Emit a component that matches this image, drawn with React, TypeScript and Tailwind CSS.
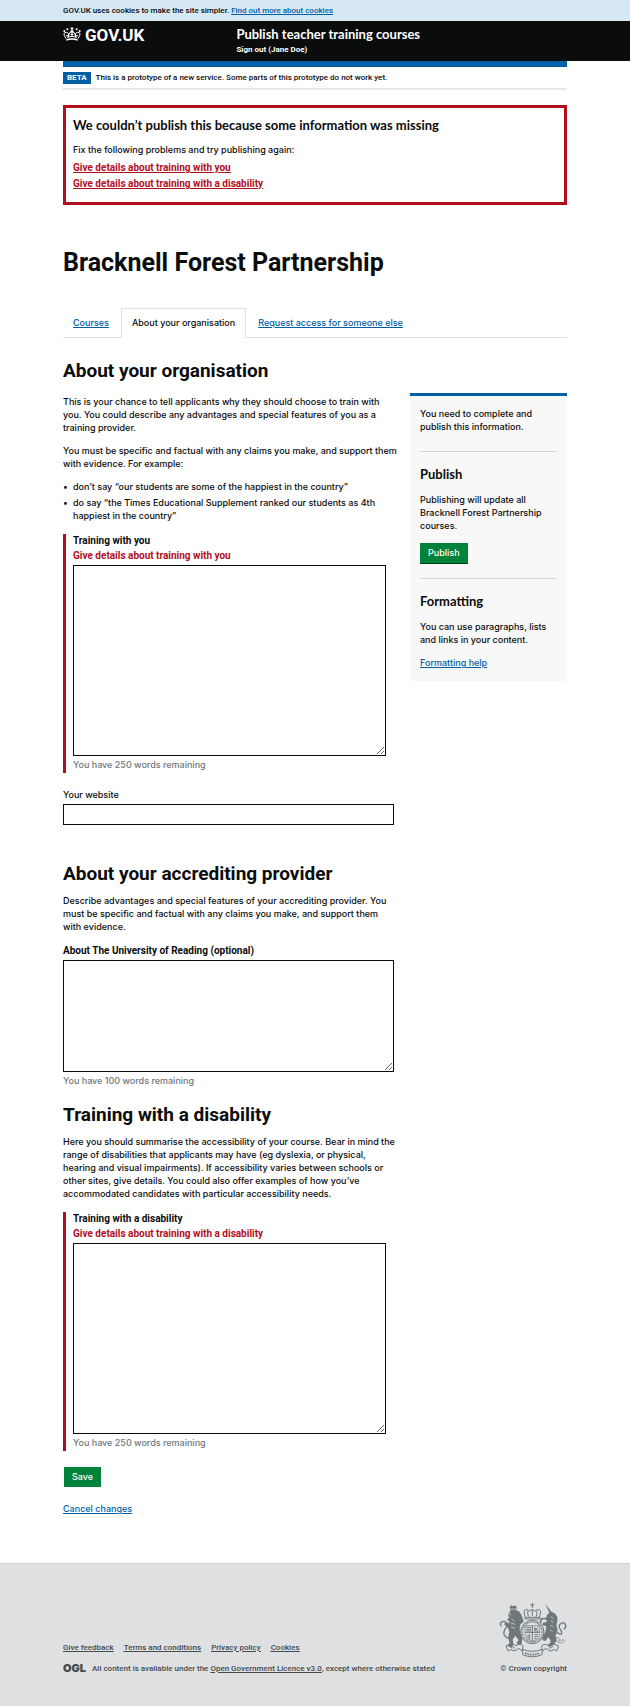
import type { ReactNode } from "react";

const link = "text-[#005ea5] underline";
const h2 = "font-[Roboto,sans-serif] text-[19px] leading-6 font-bold";
const h3 = "font-[Lato,sans-serif] text-[13px] leading-4 font-bold";
const strong = "font-[Roboto,sans-serif] text-[10px] leading-[13px] font-bold";
const field = "block w-full rounded-none border border-[#0b0c0c] bg-white";

function Crown() {
  return (
    <svg viewBox="0 0 54 42" className="h-[14px] w-[18px]" fill="none" stroke="#fff" aria-hidden="true">
      <path d="M10 39Q27 33 44 39" strokeWidth="4" />
      <path d="M9 35Q2 25 3 19Q9 12 16 19Q18 26 16 31M45 35Q52 25 51 19Q45 12 38 19Q36 26 38 31" strokeWidth="3" />
      <path d="M16 30Q17 20 22 15H32Q37 20 38 30M12 31Q27 25 42 31M27 28V14M22 22H32M9 26H16M38 26H45" strokeWidth="3" />
      <path d="M27 0V11M22 5H32" strokeWidth="3" />
      <g fill="#fff" stroke="none">
        <circle cx="4" cy="12" r="3" />
        <circle cx="13" cy="7" r="3" />
        <circle cx="41" cy="7" r="3" />
        <circle cx="50" cy="12" r="3" />
        <circle cx="27" cy="13" r="4" />
      </g>
    </svg>
  );
}

function Crest() {
  return (
    <svg viewBox="60 36 204 168" className="h-14 w-[68px]" fill="none" stroke="#6f777b" aria-hidden="true">
      <g strokeWidth="3">
        <path d="M139 87L135 63Q143 54 153 64L160 57L167 64Q177 54 185 63L181 87Z" />
        <path d="M139 82H181M160 57V78M147 62Q144 72 149 80M173 62Q176 72 171 80M160 39V54M154 45H166" />
      </g>
      <circle cx="160" cy="126" r="35" strokeWidth="3" />
      <circle cx="160" cy="126" r="30" strokeWidth="4" strokeDasharray="3 2" />
      <path d="M138 107H182V130Q181 149 160 154Q139 149 138 130Z" strokeWidth="2" />
      <path d="M160 107V154M138 127H182M142 112H157M142 118H157M142 123H157M165 112L178 123M178 112L165 123M147 133V146M152 133V149M166 134H178M166 140H176M166 146H172" strokeWidth="3" />
      <path d="M167 111V124H178" strokeWidth="2" />
      <g fill="#6f777b" stroke="none">
        <path d="M92 51L96 46L102 49L108 46L113 51L112 60H94Z" />
        <path d="M91 68L94 61L110 60Q121 62 126 72L132 87L134 96L125 102Q120 113 124 128L130 146L128 161L116 165L113 157L119 151L109 137L101 149L103 163L97 174L86 168L92 158L87 143L91 126L87 113L77 105L75 98L87 101L92 96L84 88L91 83L87 75Z" />
        <path d="M199 42L218 66L226 69L235 80L235 93L232 106L236 121L230 137L233 151L226 163L213 171L206 166L216 155L208 141L199 153L191 151L190 141L199 127L202 109L190 105L191 98L202 97L204 91L194 87L187 92L188 100L182 97L185 84L202 83L204 75L211 68Z" />
      </g>
      <path d="M87 145Q68 137 78 117Q89 108 84 98Q76 90 65 98Q62 104 68 109" strokeWidth="4" />
      <path d="M234 128Q254 139 246 121Q234 107 247 100Q257 94 260 107Q261 115 254 117" strokeWidth="4" />
      <path d="M93 57H112M89 75L97 73M98 86L107 95M96 99L108 103M96 111L108 115" strokeWidth="2" stroke="#dee0e2" />
      <path d="M216 79L222 87M215 92L224 98M214 106L223 110M213 119L221 125" strokeWidth="2" stroke="#dee0e2" />
      <path d="M226 146Q240 139 244 151Q236 158 230 152M237 158Q253 161 256 151Q251 145 246 153" strokeWidth="2" />
      <g strokeWidth="3">
        <path d="M81 168Q98 158 112 167Q123 158 133 169L128 183Q121 170 111 181Q101 186 96 178L87 183Z" />
        <path d="M239 168Q222 158 208 167Q197 158 187 169L192 183Q199 170 209 181Q219 186 224 178L233 183Z" />
        <path d="M131 178Q160 190 189 178V194Q160 207 131 194Z" fill="#dee0e2" />
        <path d="M138 189Q160 199 182 189" strokeWidth="6" strokeDasharray="3 2" />
        <path d="M98 169L108 175M211 175L222 169" strokeWidth="5" strokeDasharray="3 2" />
      </g>
    </svg>
  );
}

function ErrorField({ id, label, error }: { id: string; label: string; error: string }) {
  return (
    <div className="mt-3 border-l-[3px] border-[#b10e1e] pr-2 pl-[7px]">
      <label htmlFor={id} className={`${strong} block`}>
        <span className="block">{label}</span>
        <span className="mt-0.5 mb-[3px] block text-[#b10e1e]">{error}</span>
      </label>
      <textarea id={id} className={`${field} h-[191px]`} />
      <p className="mt-0.5 pb-0.5 text-[#6f777b]">You have 250 words remaining</p>
    </div>
  );
}

function Bullet({ children }: { children: ReactNode }) {
  return (
    <li className="flex">
      <span aria-hidden="true" className="w-2.5 shrink-0">•</span>
      <span>{children}</span>
    </li>
  );
}

function SideSection({ title, children }: { title: string; children: ReactNode }) {
  return (
    <section className="border-t border-[#d5d7d9] pt-3.5">
      <h2 className={`${h3} mb-[11px]`}>{title}</h2>
      {children}
    </section>
  );
}

export default function App() {
  return (
    <div className="bg-white font-[Inter,sans-serif] text-[9px] leading-[13px] font-medium text-[#0b0c0c]">
      <div className="bg-[#d5e8f3] px-[10%] py-1 font-[Roboto,sans-serif] text-[8px]">
        GOV.UK uses cookies to make the site simpler. <a href="#cookies" className={link}>Find out more about cookies</a>
      </div>
      <header className="flex h-10 bg-[#0b0c0c] px-[10%] font-bold text-white">
        <a href="#home" className="flex w-[34.4%] items-start gap-1 pt-1.5 font-[Roboto,sans-serif] text-[17px] leading-4">
          <Crown />
          GOV.UK
        </a>
        <div className="pt-[5px]">
          <a href="#service" className={`${h3} block`}>Publish teacher training courses</a>
          <a href="#signout" className="block font-[Roboto,sans-serif] text-[8px] leading-4">Sign out (Jane Doe)</a>
        </div>
      </header>

      <div className="px-[10%]">
        <div className="h-1.5 bg-[#005ea5]" />
        <div className="flex items-center gap-[5px] border-b-2 border-[#e6e7e8] py-1 font-[Roboto,sans-serif] text-[8px]">
          <strong className="bg-[#005ea5] px-1 leading-3 font-bold text-white">BETA</strong>
          <span>This is a prototype of a new service. Some parts of this prototype do not work yet.</span>
        </div>

        <section className="mt-[15px] border-[3px] border-[#b10e1e] px-[7px] pt-[9px] pb-3">
          <h2 className={`${h3} mb-2.5`}>We couldn’t publish this because some information was missing</h2>
          <p>Fix the following problems and try publishing again:</p>
          <ul className={`${strong} mt-[5px] space-y-[3px] text-[#b10e1e] underline`}>
            <li><a href="#training">Give details about training with you</a></li>
            <li><a href="#disability">Give details about training with a disability</a></li>
          </ul>
        </section>

        <h1 className="mt-11 font-[Roboto,sans-serif] text-[25px] leading-7 font-bold">Bracknell Forest Partnership</h1>

        <nav className="mt-[31px] flex border-b border-[#dee0e2]">
          <a href="#courses" className={`${link} px-2.5 py-2`}>Courses</a>
          <a href="#about" className="-mb-px ml-0.5 border border-b-0 border-[#dee0e2] bg-white px-2.5 pt-[7px] pb-[9px]">About your organisation</a>
          <a href="#access" className={`${link} ml-0.5 px-2.5 py-2`}>Request access for someone else</a>
        </nav>

        <div className="grid grid-cols-[331fr_157fr] items-start gap-4">
          <main className="min-w-0">
            <h2 className={`${h2} mt-[21px]`}>About your organisation</h2>
            <p className="mt-3">This is your chance to tell applicants why they should choose to train with you. You could describe any advantages and special features of you as a training provider.</p>
            <p className="mt-2.5 -mr-1">You must be specific and factual with any claims you make, and support them with evidence. For example:</p>
            <ul className="mt-2.5 space-y-[3px]">
              <Bullet>don’t say “our students are some of the happiest in the country”</Bullet>
              <Bullet>do say “the Times Educational Supplement ranked our students as 4th happiest in the country”</Bullet>
            </ul>
            <ErrorField id="training" label="Training with you" error="Give details about training with you" />
            <label htmlFor="website" className="mt-[15px] mb-[3px] block">Your website</label>
            <input id="website" type="text" className={`${field} h-[21px] px-1`} />

            <h2 className={`${h2} mt-[37px]`}>About your accrediting provider</h2>
            <p className="mt-2">Describe advantages and special features of your accrediting provider. You must be specific and factual with any claims you make, and support them with evidence.</p>
            <label htmlFor="provider" className={`${strong} mt-[11px] mb-[3px] block`}>About The University of Reading (optional)</label>
            <textarea id="provider" className={`${field} h-[112px]`} />
            <p className="mt-0.5 text-[#6f777b]">You have 100 words remaining</p>

            <h2 className={`${h2} mt-4`}>Training with a disability</h2>
            <p className="mt-2 -mr-1">Here you should summarise the accessibility of your course. Bear in mind the range of disabilities that applicants may have (eg dyslexia, or physical, hearing and visual impairments). If accessibility varies between schools or other sites, give details. You could also offer examples of how you’ve accommodated candidates with particular accessibility needs.</p>
            <ErrorField id="disability" label="Training with a disability" error="Give details about training with a disability" />
            <button type="button" className="mt-4 ml-px block bg-[#00823b] px-2 py-[3px] leading-[14px] text-white">Save</button>
            <a href="#cancel" className={`${link} mt-[15px] mb-12 inline-block`}>Cancel changes</a>
          </main>

          <aside className="mt-[55px] min-w-0 border-t-[3px] border-[#005ea5] bg-[#f8f8f8] px-2.5 pt-[11px] pb-3">
            <p className="mb-[18px]">You need to complete and publish this information.</p>
            <SideSection title="Publish">
              <p>Publishing will update all Bracknell Forest Partnership courses.</p>
              <button type="button" className="mt-[11px] mb-3.5 block border-b border-[#003618] bg-[#00823b] px-2 py-[3px] leading-[14px] text-white">Publish</button>
            </SideSection>
            <SideSection title="Formatting">
              <p>You can use paragraphs, lists and links in your content.</p>
              <a href="#help" className={`${link} mt-2.5 block`}>Formatting help</a>
            </SideSection>
          </aside>
        </div>
      </div>

      <footer className="flex items-end justify-between border-t border-[#cfd3d6] bg-[#dee0e2] px-[10%] pt-[38px] pb-8 font-[Roboto,sans-serif] text-[8px] text-[#454a4d]">
        <div>
          <nav className="mb-2 flex gap-2.5 underline">
            <a href="#feedback">Give feedback</a>
            <a href="#terms">Terms and conditions</a>
            <a href="#privacy">Privacy policy</a>
            <a href="#cookies">Cookies</a>
          </nav>
          <div className="flex items-center gap-1.5">
            <span className="font-[Inter,sans-serif] text-[11px] font-black">OGL</span>
            <p>All content is available under the <a href="#licence" className="underline">Open Government Licence v3.0</a>, except where otherwise stated</p>
          </div>
        </div>
        <a href="#copyright" className="flex flex-col items-end gap-1">
          <Crest />
          © Crown copyright
        </a>
      </footer>
    </div>
  );
}
